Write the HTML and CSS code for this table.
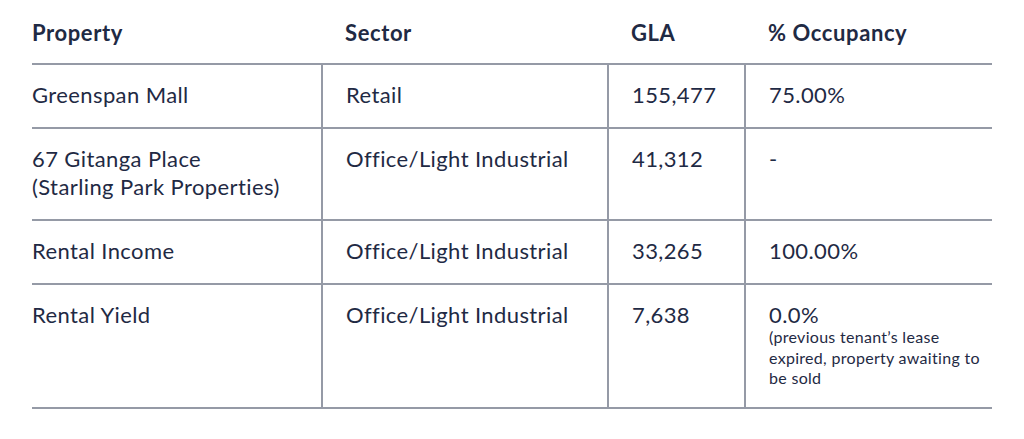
FILE: index.html
```html
<!DOCTYPE html>
<html lang="en">
<head>
<meta charset="utf-8">
<title>Properties</title>
<link rel="stylesheet" href="styles.css">
</head>
<body>
<table class="props">
  <colgroup>
    <col class="c1"><col class="c2"><col class="c3"><col class="c4">
  </colgroup>
  <thead>
    <tr><th>Property</th><th>Sector</th><th>GLA</th><th>% Occupancy</th></tr>
  </thead>
  <tbody>
    <tr><td>Greenspan Mall</td><td>Retail</td><td>155,477</td><td>75.00%</td></tr>
    <tr><td>67 Gitanga Place<br>(Starling Park Properties)</td><td>Office/Light Industrial</td><td>41,312</td><td>-</td></tr>
    <tr><td>Rental Income</td><td>Office/Light Industrial</td><td>33,265</td><td>100.00%</td></tr>
    <tr><td>Rental Yield</td><td>Office/Light Industrial</td><td>7,638</td><td>0.0%<span class="note">(previous tenant’s lease expired, property awaiting to be sold</span></td></tr>
  </tbody>
</table>
</body>
</html>
```

FILE: styles.css
```css
html, body {
  margin: 0;
  padding: 0;
  background: #ffffff;
}
body {
  padding: 0 32px;
  font-family: Lato, "Liberation Sans", sans-serif;
  color: #1f2a44;
}
.props {
  width: 960px;
  border-collapse: collapse;
  table-layout: fixed;
}
.c1 { width: 290px; }
.c2 { width: 286px; }
.c3 { width: 137px; }
.c4 { width: 247px; }
.props th {
  text-align: left;
  font-weight: 700;
  font-size: 22px;
  line-height: 28px;
  letter-spacing: 0.6px;
  padding: 19px 8px 16px 23px;
  border-bottom: 2px solid #959aa6;
}
.props td {
  vertical-align: top;
  font-size: 22px;
  line-height: 28px;
  letter-spacing: 0.4px;
  padding: 16px 8px 18px 23px;
  border-bottom: 2px solid #959aa6;
  border-left: 2px solid #959aa6;
}
.props th:first-child,
.props td:first-child {
  padding-left: 0;
  border-left: none;
}
.note {
  display: block;
  font-size: 16px;
  line-height: 20.5px;
  letter-spacing: 0.3px;
  margin-top: -2px;
}
```
